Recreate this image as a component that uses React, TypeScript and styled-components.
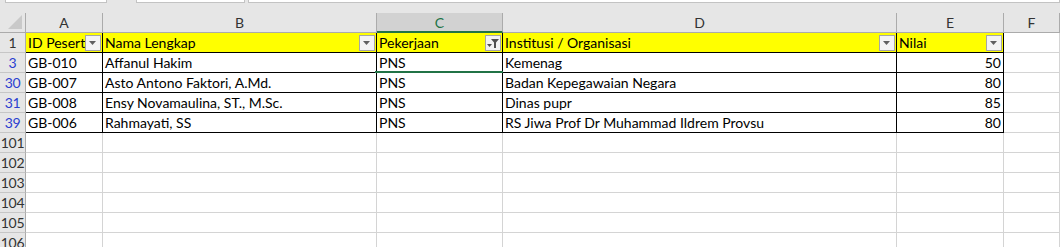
import React from 'react'
import styled, { createGlobalStyle } from 'styled-components'

const GlobalStyle = createGlobalStyle`
  html, body { margin: 0; padding: 0; background: #ffffff; }
  body { font-family: Lato, "Liberation Sans", sans-serif; overflow: hidden; }
`

const rows = [
  { n: '3', id: 'GB-010', name: 'Affanul Hakim', job: 'PNS', inst: 'Kemenag', score: 50 },
  { n: '30', id: 'GB-007', name: 'Asto Antono Faktori, A.Md.', job: 'PNS', inst: 'Badan Kepegawaian Negara', score: 80 },
  { n: '31', id: 'GB-008', name: 'Ensy Novamaulina, ST., M.Sc.', job: 'PNS', inst: 'Dinas pupr', score: 85 },
  { n: '39', id: 'GB-006', name: 'Rahmayati, SS', job: 'PNS', inst: 'RS Jiwa Prof Dr Muhammad Ildrem Provsu', score: 80 },
]

const emptyRows = ['101', '102', '103', '104', '105', '106']
const letters = ['A', 'B', 'C', 'D', 'E', 'F']
const headers = ['ID Peserta', 'Nama Lengkap', 'Pekerjaan', 'Institusi / Organisasi', 'Nilai']

function App() {
  return (
    <>
      <GlobalStyle />
      <TopStrip>
        <NameBox $width={101} $left={5} />
        <NameBox $width={109} $left={29} />
        <NameBox $width={820} $left={3} />
      </TopStrip>
      <Sheet>
        <Corner>
          <svg width="14" height="14" viewBox="0 0 14 14">
            <polygon points="14,0 14,14 0,14" fill="#c9c9c9" />
          </svg>
        </Corner>
        {letters.map((l) => (
          <ColHead key={l} $selected={l === 'C'}>{l}</ColHead>
        ))}

        <RowHead>1</RowHead>
        {headers.map((h, i) => (
          <HeaderCell key={h}>
            {h}
            <FilterButton>
              {i === 2 ? <FilterIcon /> : <Arrow />}
            </FilterButton>
          </HeaderCell>
        ))}
        <Cell $empty />

        {rows.map((r, idx) => (
          <React.Fragment key={r.n}>
            <RowHead $blue>{r.n}</RowHead>
            <Cell>{r.id}</Cell>
            <Cell>{r.name}</Cell>
            <Cell $active={idx === 0}>{r.job}</Cell>
            <Cell>{r.inst}</Cell>
            <Cell $right>{r.score}</Cell>
            <Cell $empty />
          </React.Fragment>
        ))}

        {emptyRows.map((n) => (
          <React.Fragment key={n}>
            <RowHead>{n}</RowHead>
            {letters.map((l) => (
              <Cell key={l} $empty />
            ))}
          </React.Fragment>
        ))}
      </Sheet>
    </>
  )
}

function Arrow() {
  return (
    <svg width="8" height="5" viewBox="0 0 8 5">
      <polygon points="0,0 7,0 3.5,4" fill="#606060" />
    </svg>
  )
}

function FilterIcon() {
  return (
    <svg width="13" height="11" viewBox="0 0 13 11">
      <polygon points="0,6 5,6 2.5,9" fill="#505050" />
      <polygon points="4,1 12,1 9,4.5 9,10 7,10 7,4.5" fill="#505050" />
    </svg>
  )
}

const TopStrip = styled.div`
  height: 13px;
  background: #e6e6e6;
  display: flex;
  align-items: flex-start;
`

const NameBox = styled.div<{ $width: number; $left: number }>`
  width: ${(p) => p.$width}px;
  margin-left: ${(p) => p.$left}px;
  height: 2px;
  background: #ffffff;
  border: 1px solid #c3c3c3;
  border-top: none;
`

const Sheet = styled.div`
  display: grid;
  grid-template-columns: 26px 77px 274px 126px 394px 107px 1fr;
  grid-auto-rows: 20px;
  font-size: 14px;
  color: #000000;
`

const Corner = styled.div`
  background: #e6e6e6;
  border-right: 1px solid #ababab;
  border-bottom: 1px solid #ababab;
  display: flex;
  align-items: flex-end;
  justify-content: flex-end;
  padding: 0 3px 3px 0;
  box-sizing: border-box;
`

const ColHead = styled.div<{ $selected?: boolean }>`
  background: ${(p) => (p.$selected ? '#d2d2d2' : '#e6e6e6')};
  color: ${(p) => (p.$selected ? '#217346' : '#333333')};
  border-right: 1px solid #ababab;
  border-bottom: ${(p) => (p.$selected ? '2px solid #217346' : '1px solid #ababab')};
  box-sizing: border-box;
  display: flex;
  align-items: center;
  justify-content: center;
  font-size: 14px;
  padding-top: ${(p) => (p.$selected ? '1px' : '0')};
`

const RowHead = styled.div<{ $blue?: boolean }>`
  background: #e6e6e6;
  color: ${(p) => (p.$blue ? '#2c3fd0' : '#333333')};
  border-right: 1px solid #ababab;
  border-bottom: 1px solid #c6c6c6;
  box-sizing: border-box;
  display: flex;
  align-items: center;
  justify-content: center;
  font-size: 14px;
  letter-spacing: -0.3px;
  overflow: hidden;
`

const HeaderCell = styled.div`
  position: relative;
  background: #ffff00;
  border-right: 1px solid #000000;
  border-bottom: 1px solid #000000;
  box-sizing: border-box;
  padding: 0 18px 0 2px;
  display: flex;
  align-items: center;
  white-space: nowrap;
  overflow: hidden;
`

const FilterButton = styled.div`
  position: absolute;
  right: 1px;
  top: 2px;
  width: 16px;
  height: 16px;
  box-sizing: border-box;
  border: 1px solid #a6a6a6;
  background: #f3f3f3;
  display: flex;
  align-items: center;
  justify-content: center;
`

const Cell = styled.div<{ $empty?: boolean; $right?: boolean; $active?: boolean }>`
  position: relative;
  background: #ffffff;
  border-right: 1px solid ${(p) => (p.$empty ? '#d4d4d4' : '#000000')};
  border-bottom: 1px solid ${(p) => (p.$empty ? '#d4d4d4' : '#000000')};
  box-sizing: border-box;
  padding: 0 2px;
  display: flex;
  align-items: center;
  justify-content: ${(p) => (p.$right ? 'flex-end' : 'flex-start')};
  white-space: nowrap;
  overflow: ${(p) => (p.$active ? 'visible' : 'hidden')};

  &::after {
    content: '';
    display: ${(p) => (p.$active ? 'block' : 'none')};
    position: absolute;
    left: -2px;
    right: -1px;
    bottom: -1px;
    height: 2px;
    background: #217346;
    z-index: 2;
  }
`

export default App
